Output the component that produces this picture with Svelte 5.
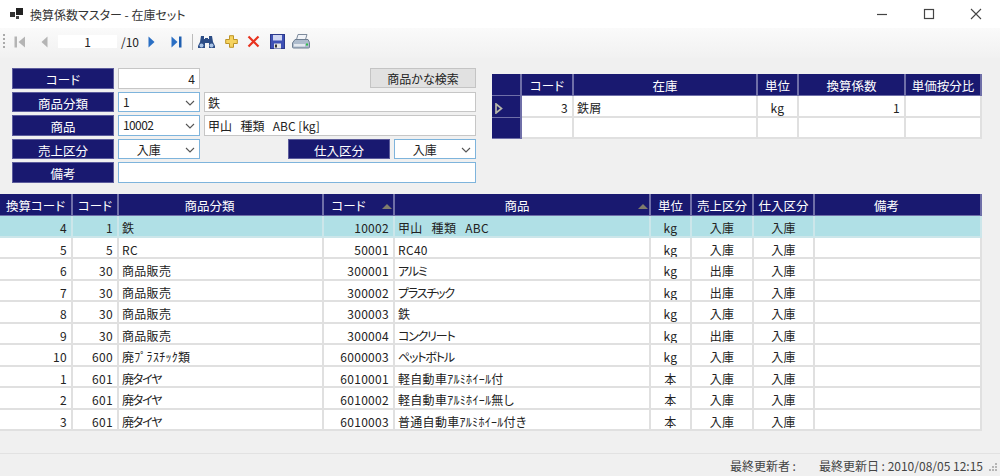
<script>
	const stock = [
		{ code: 3, name: '鉄屑', unit: 'kg', rate: 1, ratio: '', mark: true },
		{ code: '', name: '', unit: '', rate: '', ratio: '', mark: false }
	];

	const rows = [
		[4, 1, '鉄', 10002, '甲山\u2002\u2009種類\u2002\u2009ABC', 'kg', '入庫', '入庫'],
		[5, 5, 'RC', 50001, 'RC40', 'kg', '入庫', '入庫'],
		[6, 30, '商品販売', 300001, 'アルミ', 'kg', '出庫', '入庫'],
		[7, 30, '商品販売', 300002, 'プラスチック', 'kg', '出庫', '入庫'],
		[8, 30, '商品販売', 300003, '鉄', 'kg', '入庫', '入庫'],
		[9, 30, '商品販売', 300004, 'コンクリート', 'kg', '出庫', '入庫'],
		[10, 600, '廃ﾌﾟﾗｽﾁｯｸ類', 6000003, 'ペットボトル', 'kg', '入庫', '入庫'],
		[1, 601, '廃タイヤ', 6010001, '軽自動車ｱﾙﾐﾎｲｰﾙ付', '本', '入庫', '入庫'],
		[2, 601, '廃タイヤ', 6010002, '軽自動車ｱﾙﾐﾎｲｰﾙ無し', '本', '入庫', '入庫'],
		[3, 601, '廃タイヤ', 6010003, '普通自動車ｱﾙﾐﾎｲｰﾙ付き', '本', '入庫', '入庫']
	];

	// full-width katakana runs narrower in the original font
	const isKana = (text) => /[ァ-ヶ]/.test(text);
</script>

{#snippet chevron()}
	<svg class="chev" width="10" height="6" viewBox="0 0 10 6"><path d="M1 1l4 4 4-4" fill="none" stroke="#555" stroke-width="1.1" /></svg>
{/snippet}

{#snippet sortArrow()}
	<span class="sort"></span>
{/snippet}

<div class="window">
	<div class="titlebar">
		<svg class="appicon" width="13" height="11" viewBox="0 0 13 11">
			<rect x="0" y="4" width="5" height="5" fill="#333" />
			<rect x="6" y="0" width="7" height="7" fill="#222" />
			<rect x="6" y="8" width="3" height="3" fill="#444" />
		</svg>
		<span class="title">換算係数マスター - 在庫セット</span>
		<div class="winbtns">
			<svg width="12" height="12" viewBox="0 0 12 12"><path d="M1 6.5h10" stroke="#444" stroke-width="1.2" /></svg>
			<svg width="12" height="12" viewBox="0 0 12 12"><rect x="1.5" y="1.5" width="9" height="9" fill="none" stroke="#444" stroke-width="1.2" /></svg>
			<svg width="12" height="12" viewBox="0 0 12 12"><path d="M1 1l10 10M11 1L1 11" stroke="#444" stroke-width="1.1" /></svg>
		</div>
	</div>

	<div class="toolbar">
		<span class="grip"></span>
		<svg class="first" width="12" height="12" viewBox="0 0 12 12">
			<rect x="0.5" y="0.5" width="2.5" height="11" fill="#b4b4b4" />
			<path d="M11 0.5v11L4.5 6z" fill="#b4b4b4" />
		</svg>
		<svg class="prev" width="7" height="12" viewBox="0 0 7 12"><path d="M6.5 0.5v11L0.5 6z" fill="#b4b4b4" /></svg>
		<span class="page">1</span>
		<span class="total">/10</span>
		<svg class="next" width="7" height="12" viewBox="0 0 7 12"><path d="M0.5 0.5v11L6.5 6z" fill="#2a6fc4" /></svg>
		<svg class="last" width="11" height="12" viewBox="0 0 11 12">
			<path d="M0.5 0.5v11L6.5 6z" fill="#2a6fc4" />
			<rect x="8" y="0.5" width="2.5" height="11" fill="#1f5fb0" />
		</svg>
		<span class="sep"></span>
		<svg class="find" width="17" height="14" viewBox="0 0 17 14">
			<path d="M3 1h3v3h1v-1h3v1h1V1h3l1 6 2 4v2h-6V8H7v5H0v-2l2-4z" fill="#2c4d86" />
			<circle cx="3.5" cy="10.5" r="2" fill="#a9c4e6" />
			<circle cx="13.5" cy="10.5" r="2" fill="#a9c4e6" />
		</svg>
		<svg class="add" width="13" height="13" viewBox="0 0 13 13">
			<path d="M4.5 0.7h4v3.8h3.8v4H8.5v3.8h-4V8.5H0.7v-4h3.8z" fill="#f5d35f" stroke="#bd9426" />
		</svg>
		<svg class="del" width="13" height="13" viewBox="0 0 13 13"><path d="M1.5 1.5l10 10M11.500 1.5l-10 10" stroke="#e8321e" stroke-width="2.2" /></svg>
		<svg class="save" width="15" height="15" viewBox="0 0 15 15">
			<rect x="0.5" y="0.5" width="14" height="14" fill="#3f51b5" stroke="#2c3a8c" />
			<rect x="3" y="1" width="9" height="5.5" fill="#cfd6f2" />
			<rect x="4" y="9.5" width="7" height="5" fill="#e6e6e6" />
			<rect x="5" y="10.5" width="2" height="3" fill="#333" />
		</svg>
		<svg class="print" width="18" height="15" viewBox="0 0 18 15">
			<path d="M6 0.5h9l-1.5 5h-9z" fill="#f2f4f8" stroke="#7d8a9c" />
			<path d="M3 5.5h13l1.5 3v4.5a1 1 0 0 1-1 1h-15a1 1 0 0 1-1-1V9z" fill="#aebccd" stroke="#6f7f92" />
			<rect x="2" y="10" width="11" height="2.5" fill="#e4e9ef" />
			<rect x="14" y="9.5" width="2" height="2" fill="#2fbf4a" />
		</svg>
	</div>

	<div class="top">
		<div class="form">
			<div class="frow">
				<span class="label">コード</span>
				<span class="field num plain">4</span>
				<span class="button">商品かな検索</span>
			</div>
			<div class="frow">
				<span class="label">商品分類</span>
				<span class="field combo tight">1 {@render chevron()}</span>
				<span class="field plain grow">鉄</span>
			</div>
			<div class="frow">
				<span class="label">商品</span>
				<span class="field combo tight">10002 {@render chevron()}</span>
				<span class="field plain grow">甲山&ensp;&thinsp;種類&ensp;&thinsp;ABC [kg]</span>
			</div>
			<div class="frow">
				<span class="label">売上区分</span>
				<span class="field combo mid">入庫 {@render chevron()}</span>
				<span class="label right">仕入区分</span>
				<span class="field combo mid">入庫 {@render chevron()}</span>
			</div>
			<div class="frow">
				<span class="label">備考</span>
				<span class="field active grow"></span>
			</div>
		</div>

		<div class="grid stock">
			<div class="hd"></div>
			<div class="hd">コード</div>
			<div class="hd">在庫</div>
			<div class="hd">単位</div>
			<div class="hd">換算係数</div>
			<div class="hd">単価按分比</div>
			{#each stock as s}
				<div class="rowhead">
					{#if s.mark}
						<svg width="8" height="11" viewBox="0 0 8 11"><path d="M1 1l5.5 4.5L1 10z" fill="#191970" stroke="#b7b7a8" stroke-width="1.7" /></svg>
					{/if}
				</div>
				<div class="td r">{s.code}</div>
				<div class="td">{s.name}</div>
				<div class="td c">{s.unit}</div>
				<div class="td r">{s.rate}</div>
				<div class="td r">{s.ratio}</div>
			{/each}
		</div>
	</div>

	<div class="grid main">
		<div class="hd">換算コード</div>
		<div class="hd">コード</div>
		<div class="hd shift">商品分類</div>
		<div class="hd sorted">コード{@render sortArrow()}</div>
		<div class="hd sorted">商品{@render sortArrow()}</div>
		<div class="hd">単位</div>
		<div class="hd">売上区分</div>
		<div class="hd">仕入区分</div>
		<div class="hd shift">備考</div>
		{#each rows as row, i}
			<div class="td r" class:sel={i === 0}>{row[0]}</div>
			<div class="td r" class:sel={i === 0}>{row[1]}</div>
			<div class="td" class:sel={i === 0} class:kana={isKana(row[2])}>{row[2]}</div>
			<div class="td r" class:sel={i === 0}>{row[3]}</div>
			<div class="td" class:sel={i === 0} class:kana={isKana(row[4])}>{row[4]}</div>
			<div class="td c" class:sel={i === 0}>{row[5]}</div>
			<div class="td c" class:sel={i === 0}>{row[6]}</div>
			<div class="td c" class:sel={i === 0}>{row[7]}</div>
			<div class="td" class:sel={i === 0}></div>
		{/each}
	</div>

	<div class="status">
		<span>最終更新者 :</span>
		<span>最終更新日 : 2010/08/05 12:15</span>
		<svg class="sizer" width="9" height="9" viewBox="0 0 9 9" fill="#b5b5b5">
			<rect x="6" y="0" width="2" height="2" />
			<rect x="3" y="3" width="2" height="2" />
			<rect x="6" y="3" width="2" height="2" />
			<rect x="0" y="6" width="2" height="2" />
			<rect x="3" y="6" width="2" height="2" />
			<rect x="6" y="6" width="2" height="2" />
		</svg>
	</div>
</div>

<style>
	:global(body) {
		margin: 0;
		background: #f0f0f0;
	}

	.window {
		width: 1000px;
		height: 476px;
		display: flex;
		flex-direction: column;
		overflow: hidden;
		background: #f0f0f0;
		color: #222;
		font-family: "Noto Sans CJK JP", "Noto Sans", sans-serif;
		font-size: 12px;
		font-feature-settings: "palt";
	}

	.titlebar {
		height: 28px;
		flex: none;
		display: flex;
		align-items: center;
		background: #fff;
		padding-left: 10px;
	}

	.appicon {
		margin-right: 7px;
		margin-top: -2px;
	}

	.title {
		font-size: 12px;
		color: #333;
	}

	.winbtns {
		margin-left: auto;
		margin-right: 18px;
		display: flex;
		gap: 35px;
		margin-top: -1px;
	}

	.toolbar {
		height: 30px;
		flex: none;
		display: flex;
		align-items: center;
		background: linear-gradient(#fafafa, #f1f1f1);
		padding-left: 3px;
		box-sizing: border-box;
		padding-bottom: 3px;
	}

	.grip {
		width: 2px;
		height: 16px;
		background: repeating-linear-gradient(#aaa 0 2px, transparent 2px 4px);
	}

	.first { margin-left: 9px; }
	.prev { margin-left: 15px; }

	.page {
		margin-left: 10px;
		width: 59px;
		height: 13px;
		line-height: 13px;
		background: #fff;
		text-align: center;
	}

	.total {
		margin-left: 4px;
		width: 20px;
	}

	.next { margin-left: 7px; }
	.last { margin-left: 16px; }

	.sep {
		width: 1px;
		height: 16px;
		background: #bbb;
		margin-left: 10px;
	}

	.find { margin-left: 5px; }
	.add { margin-left: 10px; }
	.del { margin-left: 9px; }
	.save { margin-left: 10px; }
	.print { margin-left: 7px; }

	.top {
		display: flex;
		padding: 10px 0 0 12px;
		height: 136px;
		box-sizing: border-box;
		flex: none;
	}

	.form {
		width: 464px;
		display: flex;
		flex-direction: column;
		gap: 3px;
	}

	.frow {
		display: flex;
		gap: 4px;
		height: 20.5px;
	}

	.label {
		width: 102px;
		flex: none;
		box-sizing: border-box;
		background: #191970;
		color: #fff;
		text-align: center;
		font-size: 12.5px;
		line-height: 22px;
		border: 1px solid #5c5c9c;
	}

	.label.right {
		margin-left: 84px;
	}

	.field {
		box-sizing: border-box;
		width: 82px;
		flex: none;
		background: #fff;
		line-height: 20px;
		padding: 0 4px;
		position: relative;
		white-space: pre;
		overflow: hidden;
	}

	.plain { border: 1px solid #c6c6c6; }
	.combo, .active { border: 1px solid #7eb4dc; }
	.num { text-align: right; }
	.mid { text-align: center; padding-right: 22px; }
	.tight { letter-spacing: -0.6px; line-height: 18px; }

	.grow {
		flex: 1;
		padding-left: 3px;
	}

	.chev {
		position: absolute;
		right: 4px;
		top: 7px;
	}

	.button {
		margin-left: auto;
		width: 106px;
		height: 20px;
		box-sizing: border-box;
		background: #e1e1e1;
		border: 1px solid #c4c4c4;
		text-align: center;
		line-height: 20px;
		overflow: hidden;
	}

	.grid {
		display: grid;
		box-sizing: border-box;
		flex: none;
	}

	.stock {
		margin: 6px 0 0 16px;
		width: 490px;
		height: 65px;
		grid-template-columns: 30px 52px 184px 41px 107px 76px;
		grid-template-rows: 22px 22px 21px;
	}

	.main {
		width: 982px;
		height: 237px;
		grid-template-columns: 73px 46px 205px 71px 256px 41px 62px 61px 167px;
		grid-template-rows: 22px repeat(10, 21.5px);
	}

	.hd {
		background: #191970;
		color: #fff;
		text-align: center;
		font-size: 12.5px;
		line-height: 24px;
		border-right: 2px solid #6f6fa8;
		border-bottom: 1px solid #6f6fa8;
		box-sizing: border-box;
		position: relative;
		white-space: nowrap;
		overflow: hidden;
	}

	.shift {
		padding-right: 22px;
	}

	.sorted:nth-child(4) {
		padding-right: 20px;
	}

	.sorted:nth-child(5) {
		padding-right: 10px;
	}

	.sort {
		position: absolute;
		right: 1px;
		top: 10px;
		width: 0;
		height: 0;
		border-left: 5px solid transparent;
		border-right: 5px solid transparent;
		border-bottom: 5px solid #807c6c;
	}

	.td {
		background: #fff;
		border-right: 2px solid #e0e0e0;
		border-bottom: 2px solid #e0e0e0;
		box-sizing: border-box;
		line-height: 24px;
		padding: 0 3px;
		letter-spacing: 0.3px;
		white-space: pre;
		overflow: hidden;
	}

	.td.kana {
		letter-spacing: -1.2px;
	}

	.td.sel {
		background: #b0e0e6;
		border-color: #cce6ea;
	}

	.r { text-align: right; padding-right: 4px; }
	.c { text-align: center; }

	.rowhead {
		background: #191970;
		border-right: 2px solid #6f6fa8;
		border-bottom: 1px solid #6f6fa8;
		box-sizing: border-box;
		padding: 4px 0 0 3px;
	}

	.status {
		margin-top: 22px;
		flex: 1;
		border-top: 1px solid #e2e2e2;
		display: flex;
		justify-content: flex-end;
		align-items: center;
		gap: 23px;
		color: #444;
		padding-right: 2px;
	}

	.sizer {
		margin-left: -17px;
		margin-top: 5px;
	}
</style>
